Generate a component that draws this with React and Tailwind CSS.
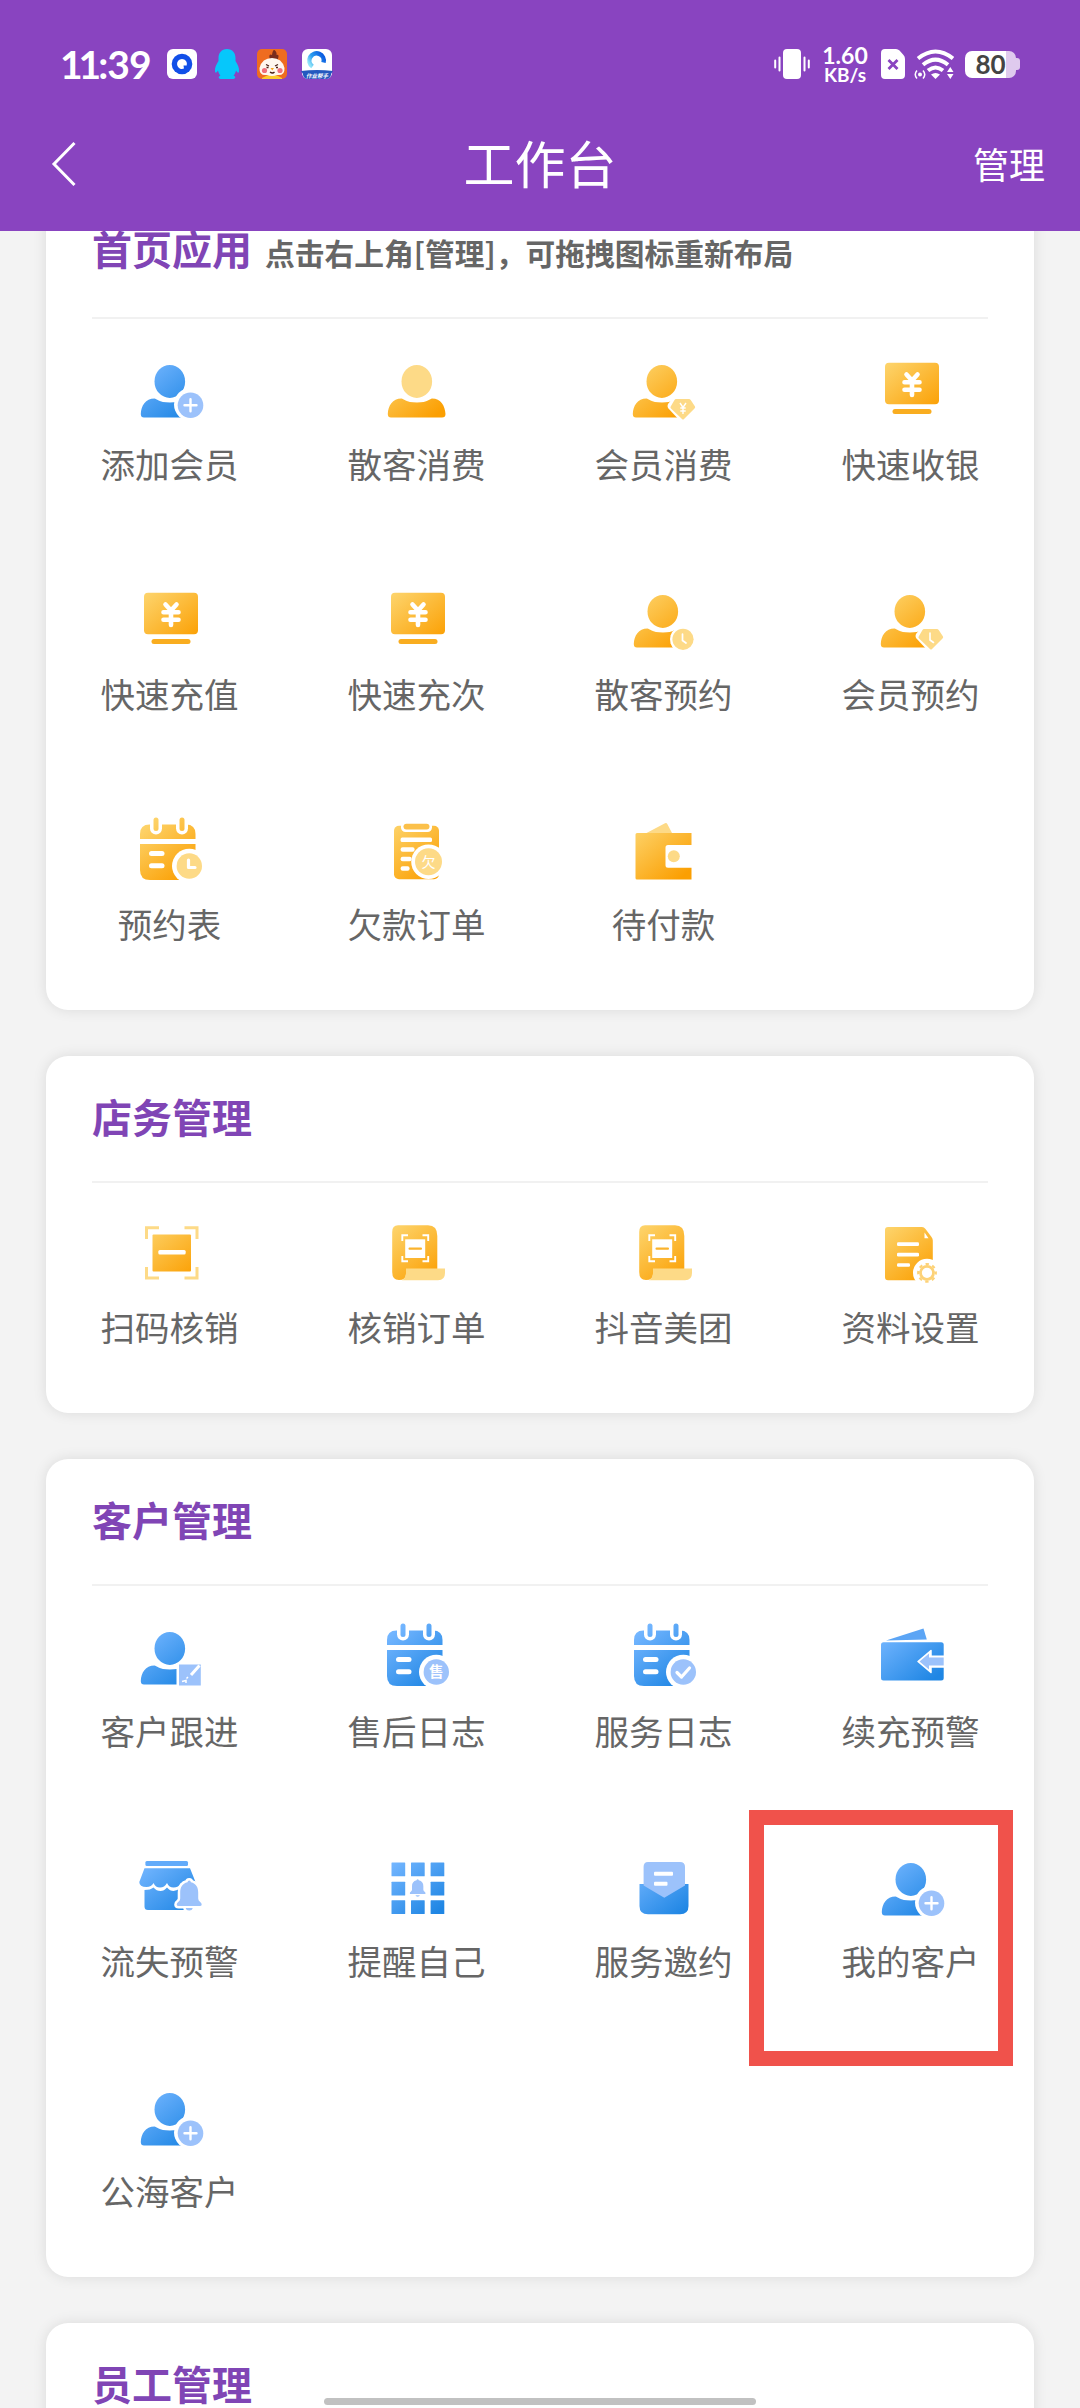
const ORANGE = "url(#orange)";
const BLUE = "url(#blue)";
const LIGHT_ORANGE = "#fdda87";
const LIGHT_BLUE = "#9cc2fb";

// Shared gradients for every menu icon
function Gradients() {
  return (
    <svg className="absolute h-0 w-0">
      <defs>
        <linearGradient id="orange" gradientUnits="userSpaceOnUse" x1="12" y1="8" x2="54" y2="60">
          <stop offset="0" stopColor="#fdd36a" />
          <stop offset="1" stopColor="#fb9f02" />
        </linearGradient>
        <linearGradient id="blue" gradientUnits="userSpaceOnUse" x1="12" y1="8" x2="54" y2="60">
          <stop offset="0" stopColor="#74b6ff" />
          <stop offset="1" stopColor="#1f86e4" />
        </linearGradient>
        <linearGradient id="browser" x1="0" y1="0.800" x2="1" y2="0.200">
          <stop offset="0" stopColor="#8fe3f8" />
          <stop offset="0.400" stopColor="#2a9cf0" />
          <stop offset="1" stopColor="#0a5be0" />
        </linearGradient>
      </defs>
    </svg>
  );
}

function Icon({ children }) {
  return (
    <svg viewBox="0 0 72 72" className="h-[72px] w-[72px] overflow-visible">
      {children}
    </svg>
  );
}

function Person({ fill, headFill }) {
  return (
    <>
      <ellipse cx="35.8" cy="25.4" rx="15.3" ry="16.5" fill={headFill || fill} />
      <path
        d="M10 61.5 Q6.8 61.5 6.8 58 C7 50 11.500 42.500 20.500 42.500 C22.500 42.500 24.500 46.500 36 46.500 C47 46.500 49 42.500 51 42.500 C60 42.500 64 50 64.500 58 Q64.500 61.500 61 61.500 Z"
        fill={fill}
      />
    </>
  );
}

function PersonPlus() {
  return (
    <Icon>
      <Person fill={BLUE} />
      <path d="M56.500 32 A16.500 16.500 0 1 0 56.500 65 H70 V32 Z" fill="#fff" />
      <circle cx="56.500" cy="49.200" r="12.800" fill={LIGHT_BLUE} />
      <path d="M50.500 49.200 h12 M56.500 43.200 v12" stroke="#fff" strokeWidth="2.400" strokeLinecap="round" />
    </Icon>
  );
}

function PersonPlain() {
  return (
    <Icon>
      <Person fill={ORANGE} headFill={LIGHT_ORANGE} />
    </Icon>
  );
}

function Gem() {
  return (
    <>
      <path d="M49 38 H72 V66 H54 L41 52 Q40 50 41 48 Z" fill="#fff" />
      <path d="M49 43 H62 Q63 43 63.700 44 L68 50.500 Q68.500 51.500 67.500 52.500 L57 63 Q56 64 55 63 L44 52.500 Q43 51.500 43.700 50.500 L47.500 44 Q48 43 49 43 Z" fill={LIGHT_ORANGE} />
    </>
  );
}

function PersonGemYen() {
  return (
    <Icon>
      <g transform="translate(-2 0)">
        <Person fill={ORANGE} />
      </g>
      <g transform="translate(-1 0)">
        <Gem />
        <path d="M53 47 L56 51.500 L59 47 M56 51.500 V58 M53.300 52 h5.400 M53.300 55 h5.400" fill="none" stroke="#fff" strokeWidth="1.400" />
      </g>
    </Icon>
  );
}

function PersonGemClock() {
  return (
    <Icon>
      <g transform="translate(-1 0)">
        <Person fill={ORANGE} />
      </g>
      <Gem />
      <path d="M55 47 V54 L58.500 56.500" fill="none" stroke="#fff" strokeWidth="1.600" strokeLinecap="round" />
    </Icon>
  );
}

function PersonClock() {
  return (
    <Icon>
      <g transform="translate(-1 0)">
        <Person fill={ORANGE} />
      </g>
      <path d="M55 40 A13.500 13.500 0 0 0 47 64 H70 V40 Z" fill="#fff" />
      <circle cx="55" cy="53.300" r="10.600" fill={LIGHT_ORANGE} />
      <path d="M54.500 48 V54.500 L58 57" fill="none" stroke="#fff" strokeWidth="1.700" strokeLinecap="round" />
    </Icon>
  );
}

function PersonEdit() {
  return (
    <Icon>
      <Person fill={BLUE} />
      <rect x="42.500" y="40" width="28" height="26" fill="#fff" />
      <rect x="45" y="41.500" width="21.800" height="21" fill={LIGHT_BLUE} />
      <path d="M57 52 L65.500 42.500" stroke="#fff" strokeWidth="3" />
      <path d="M48 58.500 L52 57.500 V60 M52.500 55.500 L54 54" fill="none" stroke="#fff" strokeWidth="1.500" />
    </Icon>
  );
}

function Monitor() {
  return (
    <Icon>
      <rect x="10" y="6.700" width="54" height="41.600" rx="4" fill={ORANGE} />
      <rect x="17.500" y="53" width="39" height="5" rx="2.500" fill="#f9ad20" />
      <path
        d="M31.500 18.500 L37 24.500 L42.500 18.500 M29.500 26.300 h15 M29.500 33.700 h15 M37 25 V39"
        fill="none"
        stroke="#fff"
        strokeWidth="4.600"
        strokeLinecap="round"
        strokeLinejoin="round"
      />
    </Icon>
  );
}

function CalendarLog({ fill, light, children }) {
  return (
    <Icon>
      <path d="M6 22 V17 Q6 7.500 15.500 7.500 H52 Q61.500 7.500 61.500 17 V22 Z" fill={fill} />
      <path d="M6 27 H61.500 V63 H16 Q6 63 6 53 Z" fill={fill} />
      <rect x="16" y="-3" width="12" height="20.500" rx="6" fill="#fff" />
      <rect x="42" y="-3" width="12" height="20.500" rx="6" fill="#fff" />
      <rect x="19.500" y="0.500" width="5" height="13.500" rx="2.500" fill={fill} />
      <rect x="45.500" y="0.500" width="5" height="13.500" rx="2.500" fill={fill} />
      <rect x="15" y="34" width="15.500" height="5" rx="2.500" fill="#fff" />
      <rect x="15" y="46.300" width="15.500" height="5" rx="2.500" fill="#fff" />
      <circle cx="55.300" cy="49" r="17.300" fill="#fff" />
      <circle cx="55.300" cy="49" r="12.700" fill={light} />
      {children}
    </Icon>
  );
}

function CalendarClock() {
  return (
    <CalendarLog fill={ORANGE} light={LIGHT_ORANGE}>
      <path d="M54.500 43 V50.500 H61" fill="none" stroke="#fff" strokeWidth="3.200" strokeLinecap="round" strokeLinejoin="round" />
    </CalendarLog>
  );
}

function CalendarSale() {
  return (
    <CalendarLog fill={BLUE} light={LIGHT_BLUE}>
      <text x="55.300" y="54.300" textAnchor="middle" fontSize="14.500" fontWeight="700" fill="#fff">售</text>
    </CalendarLog>
  );
}

function CalendarCheck() {
  return (
    <CalendarLog fill={BLUE} light={LIGHT_BLUE}>
      <path d="M49 49.500 L53.500 54 L61.500 45" fill="none" stroke="#fff" strokeWidth="3.200" strokeLinecap="round" strokeLinejoin="round" />
    </CalendarLog>
  );
}

function DebtOrder() {
  return (
    <Icon>
      <rect x="13" y="8.700" width="45" height="53.500" rx="5" fill={ORANGE} />
      <rect x="20" y="4.500" width="31" height="10.500" rx="4.500" fill="#fff" />
      <rect x="22.500" y="6.700" width="26" height="5.800" rx="2.900" fill="#fbc04a" />
      <rect x="19.600" y="20.500" width="31.400" height="4.500" rx="1.500" fill="#fff" />
      <rect x="19.600" y="30.300" width="14" height="4.500" rx="2" fill="#fff" />
      <rect x="19.600" y="39.700" width="11" height="4.500" rx="2" fill="#fff" />
      <rect x="19.600" y="49.200" width="9" height="4.500" rx="2" fill="#fff" />
      <circle cx="47.500" cy="44.800" r="17.300" fill="#fff" />
      <circle cx="47.500" cy="44.800" r="13.500" fill={LIGHT_ORANGE} />
      <text x="47.500" y="50" textAnchor="middle" fontSize="14" fill="#fff">欠</text>
    </Icon>
  );
}

function Wallet() {
  return (
    <Icon>
      <path d="M18.500 16 L37 6.300 Q38.500 5.500 39.300 7 L44 16 Z" fill={LIGHT_ORANGE} />
      <path d="M9 16 H63.500 V28 H40 Q37.500 28 37.500 30.500 V48.300 Q37.500 50.800 40 50.800 H63.500 V62.500 H9 Q7.500 62.500 7.500 61 V17.500 Q7.500 16 9 16 Z" fill={ORANGE} />
      <circle cx="45.800" cy="39.200" r="6" fill={LIGHT_ORANGE} />
    </Icon>
  );
}

function ScanCode() {
  return (
    <Icon>
      <path d="M25 7.700 H12.500 V19 M50.500 7.700 H63 V19 M63 47 V58 H50.500 M12.500 47 V58 H25" fill="none" stroke={LIGHT_ORANGE} strokeWidth="3" />
      <rect x="18.500" y="14.500" width="38.500" height="37" rx="1" fill={ORANGE} />
      <rect x="24.300" y="30" width="27.400" height="4.400" rx="1.500" fill="#fff" />
    </Icon>
  );
}

function ScanOrder() {
  return (
    <Icon>
      <path d="M17 5.300 H47 Q56.300 5.300 56.300 16 V50 H25 V54 Q25 60 18 60 Q11.200 60 11.200 52 V12 Q11.200 5.300 17 5.300 Z" fill={ORANGE} />
      <path d="M25 48.600 H64 V53 Q64 60.300 57 60.300 H21 Q25 58 25 53 Z" fill={LIGHT_ORANGE} />
      <path d="M27 15.300 H21.300 V21 M41.500 15.300 H47.200 V21 M47.200 36 V41.300 H41.500 M21.300 36 V41.300 H27" fill="none" stroke="#fff" strokeWidth="1.900" />
      <rect x="24.200" y="19.300" width="20" height="18.700" fill="#fff" />
      <rect x="27.500" y="27.400" width="13.500" height="2.300" rx="1" fill="#fbb32c" />
    </Icon>
  );
}

function FileSettings() {
  return (
    <Icon>
      <path d="M13 7 H47 Q49 7 50.500 9 L56.500 17 Q57.800 18.500 57.800 20.500 V60.300 H13 Q10 60.300 10 57.300 V10 Q10 7 13 7 Z" fill={ORANGE} />
      <path d="M49.500 12.500 L53.500 18.300 H49.500 Z" fill="#fff" />
      <rect x="22" y="22.200" width="22" height="3.800" rx="1.300" fill="#fff" />
      <rect x="22" y="32.800" width="22" height="3.800" rx="1.300" fill="#fff" />
      <rect x="22" y="43.200" width="13" height="3.500" rx="1.300" fill="#fff" />
      <circle cx="52" cy="52.800" r="14" fill="#fff" />
      <circle cx="52" cy="52.800" r="6.500" fill="none" stroke="#fdd277" strokeWidth="2.800" />
      <circle cx="52" cy="52.800" r="8.800" fill="none" stroke="#fdd277" strokeWidth="2.200" strokeDasharray="3.400 3.511" strokeDashoffset="1.700" />
    </Icon>
  );
}

function WalletAlert() {
  return (
    <Icon>
      <path d="M11 17.500 L48.500 5.500 L51.800 16.500 Z" fill="#5ca5f5" />
      <rect x="6" y="19.200" width="62.700" height="38.300" rx="2.500" fill={BLUE} />
      <path d="M70 33.300 H56 V27.500 L43 38.500 L56 49.500 V44 H70 Z" fill="#fff" stroke="#fff" strokeWidth="1.500" strokeLinejoin="round" />
      <path d="M68.700 34.600 H54 V30.500 L44.500 38.500 L54 46.500 V42.500 H68.700 Z" fill={LIGHT_BLUE} />
    </Icon>
  );
}

function Bell() {
  return (
    <path d="M12.500 0 Q14 0 14.200 1.800 C19.500 3 21.500 7 21.500 12 V18 Q21.500 20 23.500 21.500 Q25 22.500 25 24 Q25 25.500 23 25.500 H2 Q0 25.500 0 24 Q0 22.500 1.500 21.500 Q3.500 20 3.500 18 V12 C3.500 7 5.500 3 10.800 1.800 Q11 0 12.500 0 Z M9 27.500 H16 Q15.500 30 12.500 30 Q9.500 30 9 27.500 Z" />
  );
}

function ShopAlert() {
  return (
    <Icon>
      <rect x="11.400" y="7" width="42.600" height="5" rx="1.500" fill="#62abfa" />
      <path d="M10.500 14.200 H56 L61.500 28 Q61.500 33 54.500 33 Q49 33 47 29 Q44.500 33.500 39.500 33.500 Q35 33.500 33 29 Q30.500 33.500 26 33.500 Q21.500 33.500 19.500 29 Q17.500 33 12.500 33 Q5.300 33 5.300 28 Z" fill={BLUE} />
      <path d="M10.500 36 Q16.500 36 19.500 33.500 Q22.500 37 26.500 37 Q30 37 33 33.500 Q36 37 39.500 37 Q43 37 46 34 Q50 36.500 56 36 V56 H14 Q10.500 56 10.500 52.500 Z" fill={BLUE} />
      <g transform="translate(42.700 26.500)">
        <g fill="#fff" stroke="#fff" strokeWidth="5" strokeLinejoin="round">
          <Bell />
        </g>
        <g fill={LIGHT_BLUE}>
          <Bell />
        </g>
      </g>
    </Icon>
  );
}

function RemindGrid() {
  const cells = [
    [10.5, 8.5], [30, 8.5], [49.6, 8.5],
    [10.5, 27.7], [49.6, 27.7],
    [10.5, 46.3], [30, 46.3], [49.6, 46.3],
  ];
  return (
    <Icon>
      {cells.map(([x, y]) => (
        <rect key={`${x}-${y}`} x={x} y={y} width="13.700" height="13.700" rx="0.500" fill={BLUE} />
      ))}
      <g transform="translate(28.800 25.300) scale(0.630 0.580)" fill={LIGHT_BLUE}>
        <Bell />
      </g>
    </Icon>
  );
}

function Invite() {
  return (
    <Icon>
      <path d="M11.500 30 H60.500 V52 Q60.500 60.300 52 60.300 H20 Q11.500 60.300 11.500 52 Z" fill={BLUE} />
      <path d="M20 8 H52 Q57 8 57 13 V31.500 L36.300 43.800 L15.600 31.500 V13 Q15.600 8 20 8 Z" fill={LIGHT_BLUE} />
      <rect x="26" y="17.800" width="19" height="4" rx="1" fill="#fff" />
      <rect x="26" y="27.800" width="13.500" height="4" rx="1" fill="#fff" />
    </Icon>
  );
}

const sections = [
  {
    title: "首页应用",
    hint: "点击右上角[管理]，可拖拽图标重新布局",
    items: [
      { label: "添加会员", icon: <PersonPlus /> },
      { label: "散客消费", icon: <PersonPlain /> },
      { label: "会员消费", icon: <PersonGemYen /> },
      { label: "快速收银", icon: <Monitor /> },
      { label: "快速充值", icon: <Monitor /> },
      { label: "快速充次", icon: <Monitor /> },
      { label: "散客预约", icon: <PersonClock /> },
      { label: "会员预约", icon: <PersonGemClock /> },
      { label: "预约表", icon: <CalendarClock /> },
      { label: "欠款订单", icon: <DebtOrder /> },
      { label: "待付款", icon: <Wallet /> },
    ],
  },
  {
    title: "店务管理",
    items: [
      { label: "扫码核销", icon: <ScanCode /> },
      { label: "核销订单", icon: <ScanOrder /> },
      { label: "抖音美团", icon: <ScanOrder /> },
      { label: "资料设置", icon: <FileSettings /> },
    ],
  },
  {
    title: "客户管理",
    items: [
      { label: "客户跟进", icon: <PersonEdit /> },
      { label: "售后日志", icon: <CalendarSale /> },
      { label: "服务日志", icon: <CalendarCheck /> },
      { label: "续充预警", icon: <WalletAlert /> },
      { label: "流失预警", icon: <ShopAlert /> },
      { label: "提醒自己", icon: <RemindGrid /> },
      { label: "服务邀约", icon: <Invite /> },
      { label: "我的客户", icon: <PersonPlus />, highlighted: true },
      { label: "公海客户", icon: <PersonPlus /> },
    ],
  },
  { title: "员工管理", items: [] },
];

function StatusBar() {
  return (
    <div className="flex h-[97px] items-center justify-between pt-[31px] pr-[60px] pl-[60px]">
      <div className="flex items-center">
        <div className="w-[107px] text-[39px] leading-none font-bold whitespace-nowrap font-['Lato',sans-serif]">
          <span className="tracking-[-4px]">11</span>
          <span className="ml-[1px] tracking-[-1px]">:39</span>
        </div>
        <svg viewBox="0 0 30 30" className="h-[30px] w-[30px]">
          <rect width="30" height="30" rx="6" fill="#fff" />
          <circle cx="15" cy="15" r="10.300" fill="#114fe8" />
          <path d="M15 10 a5 5 0 1 0 2 9.600 l-0.500 -3 h3.200 A5 5 0 0 0 15 10 Z" fill="#fff" />
        </svg>
        <svg viewBox="0 0 26 30" className="ml-[17px] h-[30px] w-[26px]">
          <path d="M13 0 C18.500 0 21.500 4 21.500 9 V12 C23.500 15 25.500 19 25 22.500 C24.500 25 23 23 22 21.500 C21.500 24 20.500 25.500 19.500 26.500 C22 27.500 22 30 18.500 30 H7.500 C4 30 4 27.500 6.500 26.500 C5.500 25.500 4.500 24 4 21.500 C3 23 1.500 25 1 22.500 C0.500 19 2.500 15 4.500 12 V9 C4.500 4 7.500 0 13 0 Z" fill="#06c7fb" />
        </svg>
        <svg viewBox="0 0 30 30" className="ml-[17px] h-[30px] w-[30px]">
          <rect width="30" height="30" rx="5" fill="#ef6c1f" />
          <path d="M13 11 Q11 4 15 6 Q16 -1 18.500 2 Q20 4 19.500 6 Q23 5 20.500 11 Z" fill="#7a2d1d" />
          <path d="M5 29 Q15 22 25 29 V30 H5 Z" fill="#fbcb2e" />
          <path d="M15 9 Q25 9 27.500 19 Q28 27 20 26 Q15 28 10 26 Q2 27 2.500 19 Q5 9 15 9 Z" fill="#fff7ee" />
          <circle cx="7.500" cy="21.500" r="2.600" fill="#f0707a" />
          <circle cx="23" cy="21.500" r="2.600" fill="#f0707a" />
          <path d="M9 15.500 l3 1.500 M21 15.500 l-3 1.500 M9.500 18.500 h2 M19 18.500 h2 M13 23 q2.500 2 4.500 0" fill="none" stroke="#4a2015" strokeWidth="1.300" />
          <path d="M13.500 19 h3.500 l-1.700 2.500 Z" fill="#f5a41c" />
        </svg>
        <svg viewBox="0 0 32 30" className="ml-[14px] h-[30px] w-[32px]">
          <rect x="1" width="30" height="30" rx="6" fill="#fff" />
          <path d="M11.500 17.500 A7.200 7.200 0 1 1 22.500 13.500" fill="none" stroke="url(#browser)" strokeWidth="4.500" />
          <path d="M0 22 Q16 20 32 22 L30 25 V26 Q29 30 25 30 H7 Q3 30 2 26 V25 Z" fill="#2459bf" />
          <text x="16" y="28.500" textAnchor="middle" fontSize="5.500" fontWeight="700" fontStyle="italic" fill="#fff">作业帮手</text>
        </svg>
      </div>

      <div className="flex items-center">
        <svg viewBox="0 0 36 30" className="h-[30px] w-[36px]">
          <rect x="9" width="18" height="30" rx="4" fill="#fff" />
          <path d="M5.500 8.500 v13 M30.500 8.500 v13 M1.200 11.500 v7 M34.800 11.500 v7" stroke="#fff" strokeWidth="2" strokeLinecap="round" />
        </svg>
        <div className="ml-[11px] flex w-[48px] flex-col items-center font-bold whitespace-nowrap font-['Lato',sans-serif]">
          <span className="text-[23px] leading-[20px]">1.60</span>
          <span className="text-[19px] leading-[19px]">KB/s</span>
        </div>
        <svg viewBox="0 0 24 30" className="ml-[12px] h-[30px] w-[24px]">
          <path d="M4 0 H15 Q17 0 18.500 1.500 L22.500 6 Q24 7.500 24 10 V26 Q24 30 20 30 H4 Q0 30 0 26 V4 Q0 0 4 0 Z" fill="#fff" />
          <path d="M7.500 11 l9 9 M16.500 11 l-9 9" stroke="#8944c0" strokeWidth="2.800" />
        </svg>
        <svg viewBox="0 0 40 30" className="ml-[9px] h-[30px] w-[40px]">
          <g fill="none" stroke="#fff" strokeWidth="4">
            <path d="M4 9.500 Q21.500 -4.500 39 9.500" />
            <path d="M9 15.700 Q21.500 5.500 34 15.700" />
            <path d="M14 21.500 Q21.500 15.500 29 21.500" />
          </g>
          <path d="M17 25.500 Q21.500 22.500 26 25.500 L21.500 30 Z" fill="#fff" />
          <circle cx="6" cy="25.500" r="2" fill="#fff" />
          <path d="M3 21.500 Q-0.500 25.500 3 29.500 M9 21.500 Q12.500 25.500 9 29.500" fill="none" stroke="#fff" strokeWidth="1.500" />
          <path d="M33 23 h6.500 l-3.200 -5 Z M33 25 h6.500 l-3.200 5 Z" fill="#fff" />
        </svg>
        <div className="flex h-[27px] w-[51px] items-center justify-center rounded-[7px] bg-linear-to-r from-white from-80% to-[#dfcaee] to-80% ml-[11px]">
          <span className="text-[26px] leading-[27px] font-bold text-[#444] font-['Lato',sans-serif]">80</span>
        </div>
        <div className="h-[12px] w-[4px] rounded-r-[3px] bg-[#dfcaee]" />
      </div>
    </div>
  );
}

function Header() {
  return (
    <header className="relative z-10 h-[231px] bg-[#8944c0] text-white">
      <StatusBar />
      <div className="grid h-[134px] grid-cols-3 items-center pr-[35px] pl-[50px]">
        <svg viewBox="0 0 26 46" className="h-[46px] w-[26px]">
          <path d="M24.500 2 L4 23 L24.500 44" fill="none" stroke="#fff" strokeWidth="3" />
        </svg>
        <h1 className="mr-[15px] pb-[3px] text-center text-[51px] leading-none">工作台</h1>
        <span className="pb-[3px] text-right text-[36px] leading-none">管理</span>
      </div>
    </header>
  );
}

function MenuItem({ item }) {
  return (
    <div className="relative flex h-[230.330px] flex-col items-center pt-[37px]">
      {item.icon}
      <span className="mt-[10.500px] text-[34.500px] leading-[48px] whitespace-nowrap text-[#666]">{item.label}</span>
      {item.highlighted && (
        <div className="absolute top-[-7px] left-[-38px] h-[256px] w-[264px] border-[15px] border-[#f0524b]" />
      )}
    </div>
  );
}

function Section({ section }) {
  return (
    <section className="rounded-[22px] bg-white shadow-[0_0_14px_rgba(0,0,0,0.100)]">
      <div className={`mx-[46px] flex h-[127px] items-center border-b-2 border-[#f1f1f1] ${section.hint ? "pb-[9px]" : "pb-[5px]"}`}>
        <h2 className="text-[40px] leading-[56px] font-bold whitespace-nowrap text-[#8045b5]">
          {section.title}
          {section.hint && <span className="ml-[13px] text-[29.750px] text-[#666]">{section.hint}</span>}
        </h2>
      </div>
      <div className="grid grid-cols-4">
        {section.items.map((item) => (
          <MenuItem key={item.label} item={item} />
        ))}
      </div>
    </section>
  );
}

export default function App() {
  return (
    <div className="relative h-[2408px] w-[1080px] overflow-hidden bg-[#f3f3f3] font-['Noto_Sans_CJK_SC',sans-serif]">
      <Gradients />
      <Header />
      <main className="mt-[-39px] flex flex-col gap-[46px] px-[46px]">
        {sections.map((section) => (
          <Section key={section.title} section={section} />
        ))}
      </main>
      {/* Home indicator */}
      <div className="absolute bottom-[3px] left-[324px] h-[7px] w-[432px] rounded-full bg-[#c1c1c1]" />
    </div>
  );
}
